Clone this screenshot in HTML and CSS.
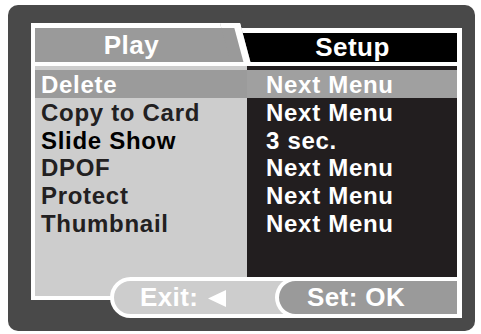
FILE: index.html
```html
<!DOCTYPE html>
<html>
<head>
<meta charset="utf-8">
<link rel="stylesheet" href="styles.css">
</head>
<body>
<div class="device">
  <div class="frame">
    <div class="tabs">
      <div class="tab tab-play">Play</div>
      <div class="tab tab-setup">Setup</div>
    </div>
    <div class="menu">
      <ul class="col col-names">
        <li class="row active">Delete</li>
        <li class="row">Copy to Card</li>
        <li class="row strong">Slide Show</li>
        <li class="row">DPOF</li>
        <li class="row">Protect</li>
        <li class="row">Thumbnail</li>
      </ul>
      <ul class="col col-values">
        <li class="row active">Next Menu</li>
        <li class="row">Next Menu</li>
        <li class="row">3 sec.</li>
        <li class="row">Next Menu</li>
        <li class="row">Next Menu</li>
        <li class="row">Next Menu</li>
      </ul>
    </div>
    <div class="bar">
      <div class="pill pill-exit">Exit:<svg class="arrow" width="18" height="17" viewBox="0 0 18 17"><polygon points="0,8.5 18,0 18,17" fill="#fff"/></svg></div>
      <div class="pill pill-set">Set: OK</div>
    </div>
  </div>
</div>
</body>
</html>
```
FILE: styles.css
```css
html, body {
  margin: 0;
  padding: 0;
  background: #ffffff;
}
body {
  font-family: "Liberation Sans", Arial, sans-serif;
  font-weight: bold;
}
.device {
  margin: 5px 0 0 8px;
  width: 467px;
  height: 326px;
  box-sizing: border-box;
  padding: 18px 0 0 23px;
  border-radius: 10px;
  background: #494949;
}
.frame {
  width: 431px;
}
.tabs {
  display: flex;
  height: 43px;
}
.tab {
  box-sizing: border-box;
  color: #ffffff;
  font-size: 26px;
  letter-spacing: 0.5px;
  text-align: center;
}
.tab-play {
  position: relative;
  z-index: 1;
  width: 209px;
  height: 43px;
  background: #9a9a9a;
  border-top: 5px solid #fff;
  border-left: 4px solid #fff;
  border-bottom: 4px solid #fff;
  line-height: 34px;
  padding-right: 12px;
}
.tab-play::after {
  content: "";
  position: absolute;
  top: -5px;
  left: 185px;
  width: 20px;
  height: 39px;
  box-sizing: border-box;
  background: #9a9a9a;
  border-top: 5px solid #fff;
  border-right: 7px solid #fff;
  transform: skewX(15deg);
  transform-origin: 0 0;
}
.tab-setup {
  flex: 1;
  margin-top: 5px;
  height: 38px;
  background: #000000;
  border-top: 5px solid #fff;
  border-right: 5px solid #fff;
  border-bottom: 4px solid #fff;
  line-height: 28px;
  padding-left: 8px;
}
.menu {
  display: flex;
  height: 234px;
  box-sizing: border-box;
  border-left: 4px solid #fff;
  border-right: 5px solid #fff;
  border-bottom: 4px solid #fff;
}
.col {
  list-style: none;
  margin: 0;
  padding: 4px 0 0 0;
  font-size: 24px;
  letter-spacing: 0.7px;
}
.col-names {
  width: 212px;
  background: #cdcdcd;
  color: #222021;
}
.col-values {
  flex: 1;
  background: #221e1f;
  color: #ffffff;
}
.row {
  height: 27.75px;
  box-sizing: border-box;
  padding-top: 3px;
  line-height: 24.75px;
  white-space: nowrap;
}
.col-names .row {
  padding-left: 6px;
}
.col-values .row {
  padding-left: 19px;
}
.col-names .row.strong {
  color: #000;
}
.col-names .row.active {
  background: #9b9b9b;
  color: #fff;
}
.col-values .row.active {
  background: #a0a0a0;
  color: #fff;
}
.bar {
  display: flex;
  margin-top: -23px;
  height: 41px;
  padding-left: 79px;
}
.pill {
  box-sizing: border-box;
  height: 41px;
  border: 4px solid #fff;
  border-radius: 21px 0 0 21px;
  color: #fff;
  font-size: 26px;
  letter-spacing: 0.4px;
  line-height: 33px;
  white-space: nowrap;
}
.pill-exit {
  width: 190px;
  background: #cdcdcd;
  padding-left: 26px;
  display: flex;
  align-items: center;
}
.arrow {
  display: block;
  margin-left: 10px;
  margin-top: 1px;
}
.pill-set {
  width: 187px;
  margin-left: -25px;
  background: #9a9a9a;
  border-right-width: 5px;
  padding-left: 28px;
}
```
